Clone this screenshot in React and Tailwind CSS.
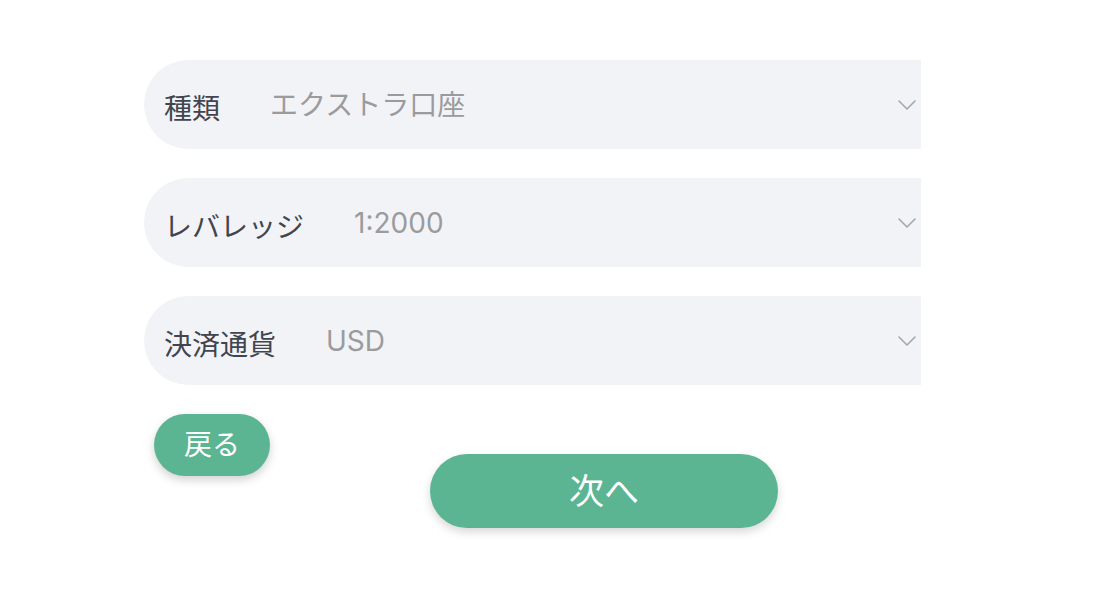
const ROWS = [
  { label: '種類', value: 'エクストラ口座' },
  { label: 'レバレッジ', value: '1:2000' },
  { label: '決済通貨', value: 'USD' },
];

const Chevron = () => (
  <svg width="20" height="12" viewBox="0 0 20 12" fill="none" stroke="#a3a6ad" strokeWidth="1.6"
    strokeLinecap="round" strokeLinejoin="round">
    <path d="M2 2l8 8 8-8" />
  </svg>
);

const SelectRow = ({ label, value }) => (
  <div className="flex items-center h-[89px] w-[777px] rounded-l-[45px] bg-[#f2f3f7] pl-[20px] pr-[4px]">
    <span className="mt-2 text-[28px] text-[#41454d] leading-none">{label}</span>
    <span className="ml-[50px] text-[28px] text-[#9b9b9e] leading-none flex-1">{value}</span>
    <Chevron />
  </div>
);

export default function App() {
  return (
    <div className="min-h-[594px] w-full bg-white pt-[60px] pl-[144px]"
      style={{ fontFamily: 'Inter, "Noto Sans CJK JP", sans-serif' }}>
      <div className="flex flex-col gap-[29px]">
        {ROWS.map(r => <SelectRow key={r.label} {...r} />)}
      </div>
      <div className="flex flex-col">
        <button className="mt-[29px] ml-[10px] w-[116px] h-[62px] rounded-full bg-[#5bb592] text-white text-[28px] leading-none shadow-[0_4px_10px_rgba(0,0,0,0.18)]">
          戻る
        </button>
        <button className="-mt-[22px] ml-[286px] w-[348px] h-[74px] rounded-full bg-[#5bb592] text-white text-[35px] leading-none shadow-[0_4px_10px_rgba(0,0,0,0.16)]">
          次へ
        </button>
      </div>
    </div>
  );
}
